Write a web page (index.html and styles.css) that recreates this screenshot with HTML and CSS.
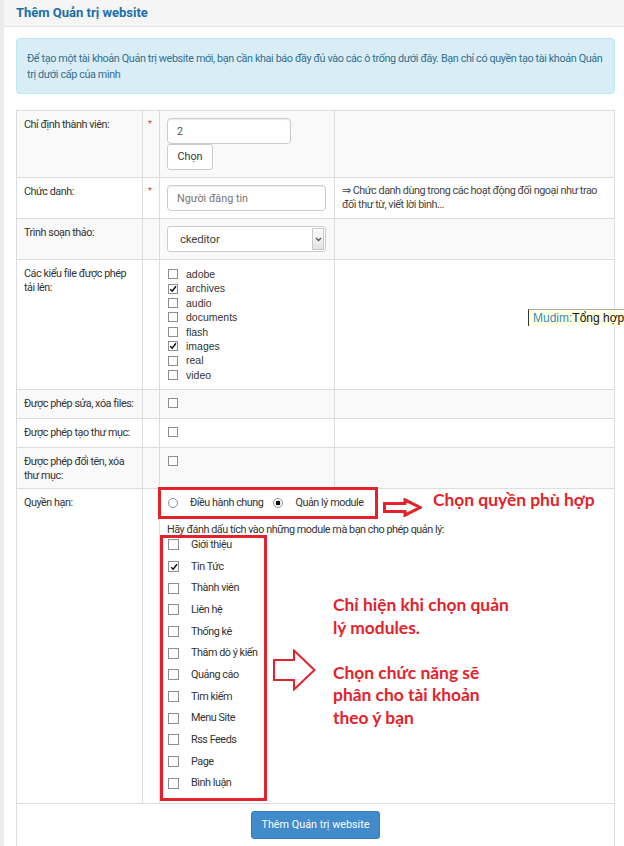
FILE: index.html
```html
<!DOCTYPE html>
<html lang="vi">
<head>
    <meta charset="UTF-8">
    <meta name="viewport" content="width=device-width, initial-scale=1.0">
    <title>Thêm Quản trị website</title>
    <link rel="stylesheet" href="styles.css">
</head>
<body>

<div class="wrap">
    <div class="panel-heading">Thêm Quản trị website</div>

    <div class="panel-body">
        <div class="alert">Để tạo một tài khoản Quản trị website mới, bạn cần khai báo đầy đủ vào các ô trống dưới đây. Bạn chỉ có quyền tạo tài khoản Quản trị dưới cấp của mình</div>

        <table class="form-table">
            <colgroup>
                <col class="c-label">
                <col class="c-star">
                <col class="c-input">
                <col>
            </colgroup>
            <tbody>
                <tr class="odd">
                    <td>Chỉ định thành viên:</td>
                    <td class="star">*</td>
                    <td>
                        <input class="form-control short" type="text" value="2">
                        <button class="btn-default">Chọn</button>
                    </td>
                    <td></td>
                </tr>
                <tr>
                    <td>Chức danh:</td>
                    <td class="star">*</td>
                    <td><input class="form-control wide" type="text" placeholder="Người đăng tin"></td>
                    <td class="help">⇒ Chức danh dùng trong các hoạt động đối ngoại như trao đối thư từ, viết lời bình...</td>
                </tr>
                <tr class="odd">
                    <td>Trình soạn thảo:</td>
                    <td></td>
                    <td>
                        <div class="select-wrap">
                            <select><option>ckeditor</option></select>
                            <span class="caret"><svg width="7" height="5" viewBox="0 0 7 5"><path d="M1 1l2.5 2.5L6 1" fill="none" stroke="#555" stroke-width="1.3"/></svg></span>
                        </div>
                    </td>
                    <td></td>
                </tr>
                <tr>
                    <td>Các kiểu file được phép tải lên:</td>
                    <td></td>
                    <td>
                        <ul class="cb-list">
                            <li><span class="cb"></span>adobe</li>
                            <li><span class="cb on"><svg viewBox="0 0 8 8"><path d="M1.2 4.2l2 2L7 1.3" fill="none" stroke="#111" stroke-width="1.5"/></svg></span>archives</li>
                            <li><span class="cb"></span>audio</li>
                            <li><span class="cb"></span>documents</li>
                            <li><span class="cb"></span>flash</li>
                            <li><span class="cb on"><svg viewBox="0 0 8 8"><path d="M1.2 4.2l2 2L7 1.3" fill="none" stroke="#111" stroke-width="1.5"/></svg></span>images</li>
                            <li><span class="cb"></span>real</li>
                            <li><span class="cb"></span>video</li>
                        </ul>
                    </td>
                    <td></td>
                </tr>
                <tr class="odd">
                    <td>Được phép sửa, xóa files:</td>
                    <td></td>
                    <td><span class="cb single"></span></td>
                    <td></td>
                </tr>
                <tr>
                    <td>Được phép tạo thư mục:</td>
                    <td></td>
                    <td><span class="cb single"></span></td>
                    <td></td>
                </tr>
                <tr class="odd">
                    <td class="two-lines">Được phép đổi tên, xóa thư mục:</td>
                    <td></td>
                    <td><span class="cb single"></span></td>
                    <td></td>
                </tr>
                <tr>
                    <td>Quyền hạn:</td>
                    <td></td>
                    <td colspan="2" class="perm-cell">
                        <div class="perm">
                            <div class="radios">
                                <span class="radio"></span><span class="radio-label">Điều hành chung</span>
                                <span class="radio on"></span><span class="radio-label">Quản lý module</span>
                            </div>
                            <div class="hint">Hãy đánh dấu tích vào những module mà bạn cho phép quản lý:</div>
                            <ul class="mod-list">
                                <li><span class="cb"></span>Giới thiệu</li>
                                <li><span class="cb on"><svg viewBox="0 0 8 8"><path d="M1.2 4.2l2 2L7 1.3" fill="none" stroke="#111" stroke-width="1.5"/></svg></span>Tin Tức</li>
                                <li><span class="cb"></span>Thành viên</li>
                                <li><span class="cb"></span>Liên hệ</li>
                                <li><span class="cb"></span>Thống kê</li>
                                <li><span class="cb"></span>Thăm dò ý kiến</li>
                                <li><span class="cb"></span>Quảng cáo</li>
                                <li><span class="cb"></span>Tìm kiếm</li>
                                <li><span class="cb"></span>Menu Site</li>
                                <li><span class="cb"></span>Rss Feeds</li>
                                <li><span class="cb"></span>Page</li>
                                <li><span class="cb"></span>Bình luận</li>
                            </ul>

                            <!-- chú thích vẽ đè lên ảnh chụp -->
                            <div class="mark mark-radios"></div>
                            <div class="mark mark-modules"></div>
                            <svg class="arrow arrow-1" width="39" height="19" viewBox="0 0 39 19">
                                <polygon points="1.5,5.5 22,5.5 22,1.8 37,9.5 22,17.2 22,13.5 1.5,13.5" fill="#fff" stroke="#e3222b" stroke-width="3"/>
                            </svg>
                            <div class="note note-1">Chọn quyền phù hợp</div>
                            <svg class="arrow arrow-2" width="43" height="42" viewBox="0 0 43 42">
                                <polygon points="1,11 21,11 21,1.5 41.5,21 21,40.5 21,31 1,31" fill="#fff" stroke="#e3222b" stroke-width="2"/>
                            </svg>
                            <div class="note note-2">Chỉ hiện khi chọn quản<br>lý modules.<br><br>Chọn chức năng sẽ<br>phân cho tài khoản<br>theo ý bạn</div>
                        </div>
                    </td>
                </tr>
                <tr>
                    <td colspan="4" class="submit-cell">
                        <button class="btn-primary">Thêm Quản trị website</button>
                    </td>
                </tr>
            </tbody>
        </table>
    </div>
</div>

<div class="mudim"><span class="mudim-name">Mudim:</span>Tổng hợp</div>

</body>
</html>
```

FILE: styles.css
```css
/* Trang thêm quản trị */
html, body {
    overflow: hidden;
}

body {
    margin: 0;
    background: #ebebeb;
    font-family: Roboto, "Liberation Sans", sans-serif;
    font-size: 10.8px;
    letter-spacing: -0.45px;
    color: #333;
}

.wrap {
    margin-left: 4px;
    height: 846px;
    background: #fff;
}

.panel-heading {
    height: 26px;
    line-height: 25px;
    padding-left: 12px;
    background: #f5f5f5;
    border-bottom: 1px solid #e4e4e4;
    color: #1b6fa6;
    font-size: 13px;
    font-weight: bold;
    letter-spacing: 0;
}

.panel-body {
    padding: 11px 9px 0 12px;
}

.alert {
    padding: 12px 10px 10px;
    line-height: 16px;
    background: #d9edf7;
    border: 1px solid #bce8f1;
    border-radius: 4px;
    color: #31708f;
    letter-spacing: -0.37px;
}

/* Bảng form */
.form-table {
    width: 100%;
    margin-top: 16px;
    border-collapse: collapse;
    border: 1px solid #ddd;
}

.c-label {
    width: 126px;
}

.c-star {
    width: 17px;
}

.c-input {
    width: 175px;
}

.form-table td {
    padding: 7px;
    border: 1px solid #ddd;
    vertical-align: top;
    line-height: 14px;
}

.form-table td.two-lines {
    padding-bottom: 5px;
}

.form-table tr.odd td {
    background: #f9f9f9;
}

.form-table td.star {
    color: #e0393e;
    font-size: 9px;
    line-height: 12px;
    padding-left: 5px;
}

.form-table td.help {
    color: #444;
    padding-top: 6px;
    padding-bottom: 5px;
}

.form-control {
    display: block;
    box-sizing: border-box;
    height: 26px;
    padding: 0 9px;
    border: 1px solid #ccc;
    border-radius: 4px;
    box-shadow: inset 0 1px 1px rgba(0, 0, 0, 0.075);
    font: inherit;
    color: #555;
    background: #fff;
}

.form-control::placeholder {
    color: #777;
}

.form-control.short {
    width: 124px;
}

.form-control.wide {
    width: 159px;
}

.btn-default {
    display: block;
    width: 46px;
    height: 26px;
    padding: 0;
    border: 1px solid #ccc;
    border-radius: 3px;
    background: #fff;
    font: inherit;
    color: #333;
}

.select-wrap {
    display: flex;
    align-items: center;
    box-sizing: border-box;
    width: 159px;
    height: 26px;
    border: 1px solid #ccc;
    border-radius: 3px;
    background: #fff;
}

.select-wrap select {
    flex: 1;
    height: 24px;
    padding-left: 12px;
    border: none;
    background: transparent;
    appearance: none;
    font: inherit;
    font-size: 11.5px;
    letter-spacing: -0.2px;
    color: #444;
    outline: none;
}

.caret {
    display: flex;
    align-items: center;
    justify-content: center;
    width: 10px;
    height: 20px;
    margin-right: 1px;
    border: 1px solid #c8c8c8;
    background: linear-gradient(#fbfbfb, #e3e3e3);
}

/* Ô đánh dấu */
.cb {
    display: inline-flex;
    align-items: center;
    justify-content: center;
    box-sizing: border-box;
    width: 10px;
    height: 10px;
    margin: 0 8px 0 1px;
    border: 1px solid #8e8e8e;
    background: #fff;
}

.cb svg {
    width: 8px;
    height: 8px;
}

.cb.single {
    vertical-align: -1px;
}

.cb-list {
    margin: 0;
    padding: 0;
    list-style: none;
    font-family: "Liberation Sans", Arial, sans-serif;
    font-size: 10.5px;
    letter-spacing: 0;
    line-height: 14.4px;
}

.cb-list li {
    display: flex;
    align-items: center;
    height: 14.4px;
}

/* Quyền hạn */
.form-table td.perm-cell {
    padding-bottom: 9px;
}

.perm {
    position: relative;
}

.radios {
    display: flex;
    align-items: center;
    height: 14px;
}

.radio {
    box-sizing: border-box;
    width: 10px;
    height: 10px;
    margin: 0 12px 0 1px;
    border: 1px solid #8e8e8e;
    border-radius: 50%;
    background: #fff;
}

.radio.on {
    background: radial-gradient(circle, #111 0 2.2px, #fff 2.6px);
}

.radio-label {
    margin-right: 9px;
}

.hint {
    margin-top: 14px;
    line-height: 12px;
}

.mod-list {
    margin: -2px 0 0;
    padding: 0;
    list-style: none;
}

.mod-list li {
    display: flex;
    align-items: center;
    height: 21.67px;
}

.mod-list .cb {
    width: 11px;
    height: 11px;
    margin-right: 12px;
}

.mark {
    position: absolute;
    box-sizing: border-box;
    border: 3px solid #e3222b;
}

.mark-radios {
    left: -9px;
    top: -9px;
    width: 220px;
    height: 32px;
}

.mark-modules {
    left: -7px;
    top: 39px;
    width: 107px;
    height: 266px;
}

.arrow {
    position: absolute;
}

.arrow-1 {
    left: 216px;
    top: 2px;
}

.arrow-2 {
    left: 106px;
    top: 153px;
}

.note {
    position: absolute;
    color: #e3222b;
    font-family: Lato, "Liberation Sans", sans-serif;
    font-weight: bold;
    font-size: 17.4px;
    letter-spacing: 0;
    white-space: nowrap;
}

.note-1 {
    left: 266px;
    top: -6px;
    line-height: 20px;
}

.note-2 {
    left: 166px;
    top: 98px;
    line-height: 22.5px;
}

/* Nút gửi */
.form-table td.submit-cell {
    text-align: center;
}

.btn-primary {
    width: 129px;
    height: 28px;
    padding: 0;
    border: 1px solid #357ebd;
    border-radius: 3px;
    background: #428bca;
    color: #fff;
    font: inherit;
}

/* Bảng trạng thái bộ gõ */
.mudim {
    position: fixed;
    left: 528px;
    top: 309px;
    width: 96px;
    height: 17px;
    overflow: hidden;
    box-sizing: border-box;
    padding-left: 4px;
    background: #ffffe1;
    border-left: 1px solid #333;
    border-top: 1px solid #aaa;
    font-family: "Liberation Sans", Arial, sans-serif;
    font-size: 12px;
    line-height: 16px;
    letter-spacing: 0;
    color: #111;
    white-space: nowrap;
}

.mudim-name {
    color: #3b8cc0;
}
```
